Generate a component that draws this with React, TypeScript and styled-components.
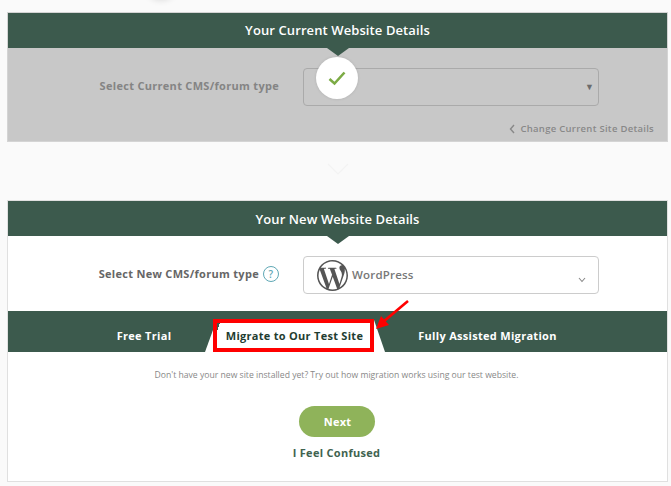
import React from 'react';
import styled, { createGlobalStyle } from 'styled-components';

const GlobalStyle = createGlobalStyle`
  html, body {
    margin: 0;
    padding: 0;
    background: #fafafa;
    font-family: "Open Sans", "Liberation Sans", sans-serif;
  }
`;

const Page = styled.div`
  position: relative;
  width: 671px;
  height: 486px;
  overflow: hidden;
  padding: 13px 4px 0 8px;
  box-sizing: border-box;
`;

const TopShadow = styled.div`
  position: absolute;
  left: 144px;
  top: -40px;
  width: 34px;
  height: 40px;
  border-radius: 50%;
  background: #fff;
  box-shadow: 0 0 7px rgba(0, 0, 0, 0.14);
`;

const Card = styled.section<{ $muted?: boolean }>`
  position: relative;
  background: ${p => (p.$muted ? '#c8c8c8' : '#fff')};
  box-shadow: 0 0 0 1px ${p => (p.$muted ? '#d4d4d4' : '#e0e0e0')};
`;

const CardHeader = styled.h2<{ $line: number }>`
  position: relative;
  margin: 0;
  height: 35px;
  line-height: ${p => p.$line}px;
  background: #3c5a4d;
  color: #fff;
  font-size: 13px;
  font-weight: 600;
  letter-spacing: 0.1px;
  text-align: center;

  &::after {
    content: '';
    position: absolute;
    left: 50%;
    top: 100%;
    margin-left: -11px;
    border-style: solid;
    border-width: 8px 11px 0;
    border-color: #3c5a4d transparent transparent;
  }
`;

const FieldRow = styled.div`
  display: flex;
  align-items: center;
  padding-top: 20px;
`;

const FieldLabel = styled.div<{ $muted?: boolean }>`
  display: flex;
  align-items: center;
  justify-content: flex-end;
  gap: 4px;
  width: 271px;
  margin-right: 24px;
  padding-bottom: 3px;
  color: ${p => (p.$muted ? '#848484' : '#666')};
  font-size: 11px;
  font-weight: 700;
  letter-spacing: 0.3px;
`;

const HelpBadge = styled.span`
  width: 14px;
  height: 14px;
  border: 1px solid #5fa8b5;
  border-radius: 50%;
  color: #5fa8b5;
  font-size: 10px;
  font-weight: 600;
  line-height: 14px;
  text-align: center;
`;

const SelectBox = styled.div<{ $muted?: boolean }>`
  position: relative;
  display: flex;
  align-items: center;
  box-sizing: border-box;
  width: 296px;
  height: 38px;
  padding-left: 13px;
  border: 1px solid ${p => (p.$muted ? '#aaa' : '#ccc')};
  border-radius: 4px;
`;

const Caret = styled.span`
  position: absolute;
  right: 4px;
  top: 12px;
  color: #6c6c6c;
  font-size: 9px;
  line-height: 12px;
`;

const Chevron = styled.svg`
  position: absolute;
  right: 12px;
  top: 20px;
`;

const CmsName = styled.span`
  margin: 0 0 2px 4px;
  color: #777;
  font-size: 11.5px;
  font-weight: 600;
  letter-spacing: 0.2px;
`;

const ChangeLink = styled.div`
  display: flex;
  align-items: center;
  justify-content: flex-end;
  gap: 5px;
  box-sizing: border-box;
  height: 35px;
  padding: 10px 13px 0 0;
  color: #888;
  font-size: 9.5px;
  font-weight: 600;
  letter-spacing: 0.28px;
`;

const CheckBadge = styled.div`
  position: absolute;
  left: 308px;
  top: 44px;
  display: flex;
  align-items: center;
  justify-content: center;
  width: 42px;
  height: 42px;
  border-radius: 50%;
  background: #fff;
  box-shadow: 0 0 3px rgba(0, 0, 0, 0.12);
`;

const Divider = styled.div`
  display: flex;
  justify-content: center;
  height: 60px;
  padding-top: 22px;
  box-sizing: border-box;
`;

const TabBar = styled.div`
  display: flex;
  height: 41px;
  margin-top: 17px;
  padding-left: 76px;
  background: #3c5a4d;
`;

const Tab = styled.div<{ $width: number }>`
  width: ${p => p.$width}px;
  padding-top: 8px;
  box-sizing: border-box;
  color: #fff;
  font-size: 11px;
  font-weight: 700;
  letter-spacing: 0.3px;
  line-height: 33px;
  text-align: center;
`;

const ActiveTab = styled.div`
  position: relative;
  align-self: flex-end;
  box-sizing: border-box;
  width: 161px;
  height: 33px;
  margin: 0 9px;
  padding-left: 2px;
  border: 4px solid #ff0000;
  background:
    linear-gradient(to bottom right, #3c5a4d 50%, transparent 50%) 0 0 / 3px 8px no-repeat,
    #fff;
  color: #1f3d31;
  font-size: 11px;
  font-weight: 700;
  letter-spacing: 0.28px;
  line-height: 25px;
  text-align: center;

  &::before,
  &::after {
    content: '';
    position: absolute;
    bottom: -4px;
    background: #fff;
  }
  &::before {
    left: -12px;
    width: 8px;
    height: 22px;
    clip-path: polygon(100% 0, 100% 100%, 0 100%);
  }
  &::after {
    right: -15px;
    width: 11px;
    height: 32px;
    clip-path: polygon(0 0, 100% 100%, 0 100%);
  }
`;

const Annotation = styled.svg`
  position: absolute;
  left: 363px;
  top: 98px;
`;

const PanelBody = styled.div`
  display: flex;
  flex-direction: column;
  align-items: center;
  box-sizing: border-box;
  height: 129px;
  padding-right: 2px;
`;

const Intro = styled.p`
  margin: 16px 0 0;
  color: #888;
  font-size: 8.65px;
  line-height: 14px;
`;

const NextButton = styled.button`
  width: 76px;
  height: 31px;
  margin-top: 24px;
  padding: 0 0 0 2px;
  border: 0;
  border-radius: 16px;
  background: #8fb35a;
  color: #fff;
  font-family: inherit;
  font-size: 11px;
  font-weight: 700;
  letter-spacing: 0.2px;
`;

const ConfusedLink = styled.a`
  margin-top: 8px;
  color: #3f6350;
  font-size: 11px;
  font-weight: 700;
  letter-spacing: 0.3px;
`;

function WordPressLogo() {
  return (
    <svg width="31" height="31" viewBox="0 0 24 24" fill="#555">
      <path d="M21.469 6.825c.84 1.537 1.318 3.3 1.318 5.175 0 3.979-2.156 7.456-5.363 9.325l3.295-9.527c.615-1.54.82-2.771.82-3.864 0-.405-.026-.78-.07-1.11m-7.981.105c.647-.03 1.232-.105 1.232-.105.582-.075.514-.93-.067-.899 0 0-1.755.135-2.88.135-1.064 0-2.85-.15-2.85-.15-.585-.03-.661.855-.075.885 0 0 .54.061 1.125.09l1.68 4.605-2.37 7.08L5.354 6.9c.649-.03 1.234-.1 1.234-.1.585-.075.516-.93-.065-.896 0 0-1.746.138-2.874.138-.2 0-.438-.008-.69-.015C4.911 3.15 8.235 1.215 12 1.215c2.809 0 5.365 1.072 7.286 2.833-.046-.003-.091-.009-.141-.009-1.06 0-1.812.923-1.812 1.914 0 .89.513 1.643 1.06 2.531.411.72.89 1.643.89 2.977 0 .915-.354 1.994-.821 3.479l-1.075 3.585-3.9-11.61.001.014zM12 22.784c-1.059 0-2.081-.153-3.048-.437l3.237-9.406 3.315 9.087c.024.053.05.101.078.149-1.12.393-2.325.609-3.582.609M1.211 12c0-1.564.336-3.05.935-4.39L7.29 21.709C3.694 19.96 1.212 16.271 1.211 12M12 0C5.385 0 0 5.385 0 12s5.385 12 12 12 12-5.385 12-12S18.615 0 12 0" />
    </svg>
  );
}

export default function App() {
  return (
    <Page>
      <GlobalStyle />
      <TopShadow />
      <Card $muted>
        <CardHeader $line={35}>Your Current Website Details</CardHeader>
        <FieldRow>
          <FieldLabel $muted>Select Current CMS/forum type</FieldLabel>
          <SelectBox $muted>
            <Caret>▼</Caret>
          </SelectBox>
        </FieldRow>
        <ChangeLink>
          <svg width="6" height="10" viewBox="0 0 6 10" fill="none" stroke="#888" strokeWidth="1.4">
            <path d="M5 1 1.5 5 5 9" />
          </svg>
          Change Current Site Details
        </ChangeLink>
        <CheckBadge>
          <svg width="18" height="15" viewBox="0 0 18 15" fill="none" stroke="#7cab45" strokeWidth="2.6">
            <path d="M1.5 8 6.5 12.5 16.5 1.5" />
          </svg>
        </CheckBadge>
      </Card>
      <Divider>
        <svg width="22" height="12" viewBox="0 0 22 12" fill="none" stroke="#f3f3f3" strokeWidth="1.2">
          <path d="M1 1 11 11 21 1" />
        </svg>
      </Divider>
      <Card>
        <CardHeader $line={36}>Your New Website Details</CardHeader>
        <FieldRow>
          <FieldLabel>
            Select New CMS/forum type <HelpBadge>?</HelpBadge>
          </FieldLabel>
          <SelectBox>
            <WordPressLogo />
            <CmsName>WordPress</CmsName>
            <Chevron width="8" height="6" viewBox="0 0 8 6" fill="none" stroke="#888" strokeWidth="1.1">
              <path d="M1 1 4 4.5 7 1" />
            </Chevron>
          </SelectBox>
        </FieldRow>
        <TabBar>
          <Tab $width={120}>Free Trial</Tab>
          <ActiveTab>Migrate to Our Test Site</ActiveTab>
          <Tab $width={209}>Fully Assisted Migration</Tab>
        </TabBar>
        <PanelBody>
          <Intro>Don't have your new site installed yet? Try out how migration works using our test website.</Intro>
          <NextButton>Next</NextButton>
          <ConfusedLink>I Feel Confused</ConfusedLink>
        </PanelBody>
        <Annotation width="42" height="32" viewBox="0 0 42 32">
          <path d="M37 2 12 23" stroke="#f00" strokeWidth="2.6" fill="none" />
          <path d="M5 30 10 17 18 26Z" fill="#f00" />
        </Annotation>
      </Card>
    </Page>
  );
}
